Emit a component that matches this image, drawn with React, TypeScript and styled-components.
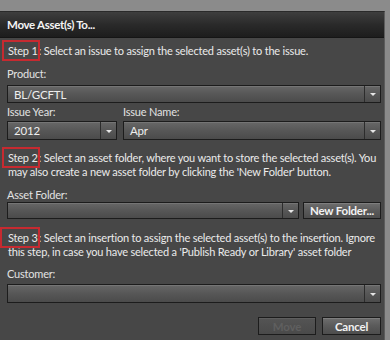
import React from 'react'
import styled, { createGlobalStyle } from 'styled-components'

const Global = createGlobalStyle`
  html, body { margin: 0; padding: 0; background: #8b8b8b; }
  body { font-family: Lato, "Open Sans", sans-serif; }
`

const Page = styled.div`
  width: 390px;
  height: 340px;
  padding-top: 11px;
  box-sizing: border-box;
  overflow: hidden;
`

const Dialog = styled.div`
  height: 329px;
  background: #474747;
  border-top: 1px solid #2a2a2a;
  border-right: 1px solid #5c5c5c;
  margin-right: 5px;
  display: flex;
  flex-direction: column;
`

const TitleBar = styled.div`
  height: 26px;
  flex: none;
  background: linear-gradient(#3e3e3e, #2a2a2a 50%, #1d1d1d);
  border-bottom: 1px solid #151515;
  box-sizing: border-box;
  color: #f4f4f4;
  font-weight: bold;
  font-size: 11.5px;
  letter-spacing: -0.3px;
  display: flex;
  align-items: center;
  padding-left: 7px;
`

const Body = styled.div`
  padding: 0 3px 0 7px;
  color: #e6e6e6;
  font-size: 11px;
  letter-spacing: -0.2px;
  display: flex;
  flex-direction: column;
`

const Step = styled.p<{ $top: number }>`
  margin: ${p => p.$top}px 0 0 1px;
  line-height: 14px;
  white-space: nowrap;
  color: #ebebeb;
`

const StepTag = styled.span<{ $left?: number }>`
  position: relative;
  padding-right: 1px;
  &::before {
    content: '';
    position: absolute;
    left: ${p => p.$left ?? -6}px;
    right: -1px;
    top: -4px;
    bottom: -4px;
    border: 2px solid #c62a30;
  }
`

const Label = styled.div<{ $top: number }>`
  margin-top: ${p => p.$top}px;
  line-height: 14px;
  color: #e2e2e2;
`

const Row = styled.div<{ $top?: number; $gap?: number }>`
  display: flex;
  gap: ${p => p.$gap ?? 6}px;
  margin-top: ${p => p.$top ?? 0}px;
`

const Col = styled.div<{ $w?: number }>`
  display: flex;
  flex-direction: column;
  ${p => (p.$w ? `width: ${p.$w}px;` : 'flex: 1;')}
`

const Select = styled.div<{ $h: number }>`
  flex: 1;
  height: ${p => p.$h}px;
  display: flex;
  box-sizing: border-box;
  border: 1px solid #1c1c1c;
  background: linear-gradient(#676767, #575757 50%, #4b4b4b);
  box-shadow: inset 0 1px 0 #757575;
`

const Value = styled.div`
  flex: 1;
  padding-left: 6px;
  display: flex;
  align-items: center;
  font-size: 11.5px;
  color: #eeeeee;
`

const Arrow = styled.div`
  width: 15px;
  border-left: 1px solid #2c2c2c;
  display: flex;
  align-items: center;
  justify-content: center;
  &::after {
    content: '';
    margin-top: 1px;
    border-left: 3px solid transparent;
    border-right: 3px solid transparent;
    border-top: 3px solid #e6e6e6;
  }
`

const Button = styled.div<{ $w: number; $h: number; $disabled?: boolean }>`
  width: ${p => p.$w}px;
  height: ${p => p.$h}px;
  box-sizing: border-box;
  border: 1px solid #1c1c1c;
  background: ${p =>
    p.$disabled ? 'linear-gradient(#545454, #4a4a4a)' : 'linear-gradient(#6e6e6e, #5a5a5a 50%, #4d4d4d)'};
  box-shadow: inset 0 1px 0 ${p => (p.$disabled ? '#5e5e5e' : '#7e7e7e')};
  color: ${p => (p.$disabled ? '#5f5f5f' : '#f2f2f2')};
  font-size: 11.5px;
  font-weight: bold;
  display: flex;
  align-items: center;
  justify-content: center;
`

const Footer = styled.div`
  display: flex;
  justify-content: flex-end;
  gap: 6px;
  margin-top: 14px;
`

const Drop = ({ value, h = 19 }: { value?: string; h?: number }) => (
  <Select $h={h}>
    <Value>{value}</Value>
    <Arrow />
  </Select>
)

export default function App() {
  return (
    <>
      <Global />
      <Page>
        <Dialog>
          <TitleBar>Move Asset(s) To...</TitleBar>
          <Body>
            <Step $top={6}>
              <StepTag>Step 1</StepTag>: Select an issue to assign the selected asset(s) to the issue.
            </Step>
            <Label $top={9}>Product:</Label>
            <Row $top={4}>
              <Drop value="BL/GCFTL" h={18} />
            </Row>
            <Row $top={2}>
              <Col $w={110}>
                <Label $top={0}>Issue Year:</Label>
                <Row $top={2}>
                  <Drop value="2012" />
                </Row>
              </Col>
              <Col>
                <Label $top={0}>Issue Name:</Label>
                <Row $top={2}>
                  <Drop value="Apr" />
                </Row>
              </Col>
            </Row>
            <Step $top={11}>
              <StepTag>Step 2</StepTag>: Select an asset folder, where you want to store the selected asset(s). You
              <br />
              may also create a new asset folder by clicking the 'New Folder' button.
            </Step>
            <Label $top={9}>Asset Folder:</Label>
            <Row $top={0} $gap={4}>
              <Drop h={17} />
              <Button $w={78} $h={17}>New Folder...</Button>
            </Row>
            <Step $top={12}>
              <StepTag $left={-8}>Step 3</StepTag>: Select an insertion to assign the selected asset(s) to the insertion. Ignore
              <br />
              this step, in case you have selected a 'Publish Ready or Library' asset folder
            </Step>
            <Label $top={8}>Customer:</Label>
            <Row $top={3}>
              <Drop />
            </Row>
            <Footer>
              <Button $w={58} $h={18} $disabled>Move</Button>
              <Button $w={59} $h={18}>Cancel</Button>
            </Footer>
          </Body>
        </Dialog>
      </Page>
    </>
  )
}
